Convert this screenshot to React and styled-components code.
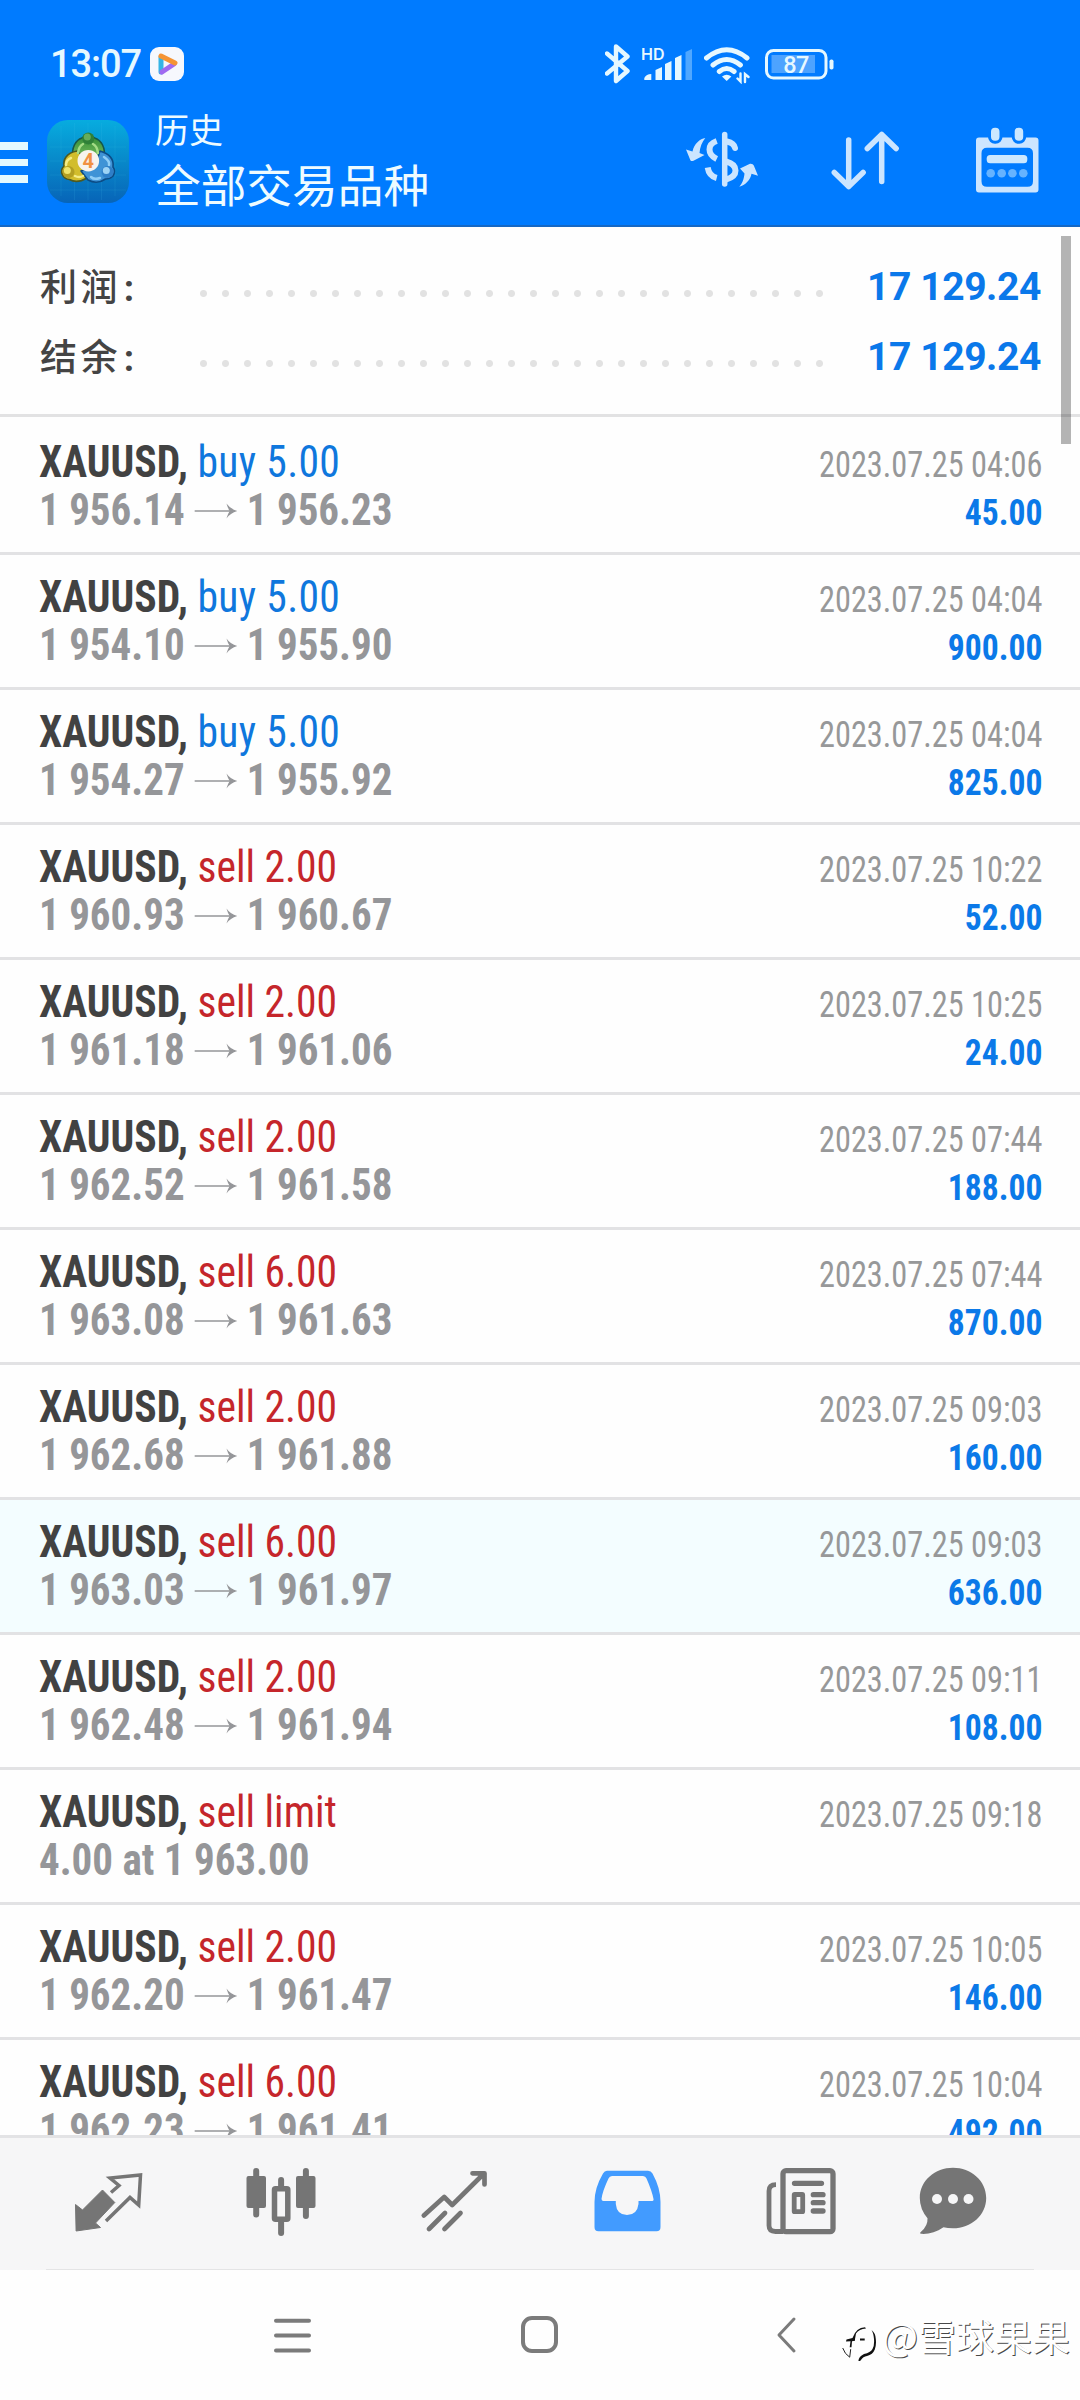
import React from "react";
import styled, { createGlobalStyle } from "styled-components";

const GlobalStyle = createGlobalStyle`
	* {
		box-sizing: border-box;
	}
	body {
		margin: 0;
		background: #fff;
		font-family: Roboto, "Noto Sans CJK SC", sans-serif;
	}
	svg {
		display: block;
		flex: none;
	}
`;

const DEALS = [
	{ type: 'buy', label: 'buy 5.00', open: '1 956.14', close: '1 956.23', time: '2023.07.25 04:06', profit: '45.00' },
	{ type: 'buy', label: 'buy 5.00', open: '1 954.10', close: '1 955.90', time: '2023.07.25 04:04', profit: '900.00' },
	{ type: 'buy', label: 'buy 5.00', open: '1 954.27', close: '1 955.92', time: '2023.07.25 04:04', profit: '825.00' },
	{ type: 'sell', label: 'sell 2.00', open: '1 960.93', close: '1 960.67', time: '2023.07.25 10:22', profit: '52.00' },
	{ type: 'sell', label: 'sell 2.00', open: '1 961.18', close: '1 961.06', time: '2023.07.25 10:25', profit: '24.00' },
	{ type: 'sell', label: 'sell 2.00', open: '1 962.52', close: '1 961.58', time: '2023.07.25 07:44', profit: '188.00' },
	{ type: 'sell', label: 'sell 6.00', open: '1 963.08', close: '1 961.63', time: '2023.07.25 07:44', profit: '870.00' },
	{ type: 'sell', label: 'sell 2.00', open: '1 962.68', close: '1 961.88', time: '2023.07.25 09:03', profit: '160.00' },
	{ type: 'sell', label: 'sell 6.00', open: '1 963.03', close: '1 961.97', time: '2023.07.25 09:03', profit: '636.00', active: true },
	{ type: 'sell', label: 'sell 2.00', open: '1 962.48', close: '1 961.94', time: '2023.07.25 09:11', profit: '108.00' },
	{ type: 'sell', label: 'sell limit', note: '4.00 at 1 963.00', time: '2023.07.25 09:18' },
	{ type: 'sell', label: 'sell 2.00', open: '1 962.20', close: '1 961.47', time: '2023.07.25 10:05', profit: '146.00' },
	{ type: 'sell', label: 'sell 6.00', open: '1 962.23', close: '1 961.41', time: '2023.07.25 10:04', profit: '492.00' }
];

const TOTALS = [
	{ label: '利润', value: '17 129.24' },
	{ label: '结余', value: '17 129.24' }
];

const Screen = styled.div`
	position: relative;
	display: flex;
	flex-direction: column;
	width: 1080px;
	height: 2400px;
	overflow: hidden;
	background: #fefefe;
`;

const Header = styled.header`
	flex: none;
	height: 227px;
	background: #007bff;
	border-bottom: 2px solid #1668c4;
`;

const StatusBar = styled.div`
	display: flex;
	align-items: center;
	height: 100px;
	padding: 28px 0 0 50px;
	color: #e6f8ff;
`;

const Clock = styled.span`
	width: 100px;
	font-size: 38px;
	font-weight: 500;
	line-height: 40px;
	letter-spacing: -1.1px;
	white-space: nowrap;
`;

const StatusIcons = styled.div`
	display: flex;
	margin-left: 421px;
	gap: 12px;
`;

const AppBar = styled.div`
	display: flex;
	height: 125px;
`;

const MenuIcon = styled.div`
	display: flex;
	flex-direction: column;
	gap: 9px;
	width: 28px;
	margin: 42px 19px 0 0;
	i {
		height: 7.5px;
		background: #e4f9ff;
	}
`;

const Logo = styled.svg`
	margin-top: 20px;
`;

const Titles = styled.div`
	width: 540px;
	margin: 6px 0 0 26px;
	color: #eefbff;
	white-space: nowrap;
`;

const Subtitle = styled.div`
	font-size: 34px;
	line-height: 50px;
`;

const Title = styled.div`
	font-size: 45.7px;
	line-height: 64px;
`;

const Actions = styled.div`
	display: flex;
	padding-top: 27px;
	margin-left: -9px;
	gap: 73px;
	svg:last-child {
		margin-left: 3px;
	}
`;

const Summary = styled.section`
	flex: none;
	height: 190px;
	padding: 23px 39px 0 40px;
	border-bottom: 3px solid #e2e2e3;
`;

const TotalRow = styled.div`
	display: flex;
	align-items: center;
	justify-content: space-between;
	height: 70px;
	color: #444;
`;

const TotalLabel = styled.span`
	width: 160px;
	font-size: 37px;
	font-weight: 500;
	letter-spacing: 3.4px;
	span {
		margin-left: 3px;
		font-weight: 700;
	}
`;

const Dots = styled.span`
	width: 638px;
	height: 7px;
	margin: 16px 23px 0 0;
	background: radial-gradient(circle at 3.5px 3.5px, #e2e2e2 3px, transparent 4px) 0 0 / 22px 7px;
`;

const TotalValue = styled.span`
	flex: 1;
	padding-top: 3px;
	color: #0a78ea;
	font-size: 39px;
	font-weight: 700;
	letter-spacing: -.4px;
	text-align: right;
	white-space: nowrap;
`;

const List = styled.main`
	flex: none;
	height: 1718px;
	padding-top: 3px;
	overflow: hidden;
`;

const Row = styled.div`
	display: flex;
	justify-content: space-between;
	height: 135px;
	padding: 18px 38px 0 39px;
	background: ${props => props.$active ? '#f3fdff' : 'transparent'};
	border-bottom: 3px solid #e2e2e4;
	font-stretch: 75%;
	font-family: "Roboto Condensed", Roboto, sans-serif;
	white-space: nowrap;
`;

// the app's typeface is a bit narrower than Roboto Condensed
const Narrow = styled.div`
	line-height: 48px;
	transform: scaleX(${props => props.$scale});
	transform-origin: ${props => props.$origin || 'left'};
`;

const Left = styled.div`
	padding-top: 1px;
`;

const Symbol = styled(Narrow)`
	color: #424242;
	font-size: 43.5px;
	font-weight: 700;
	span {
		color: ${props => props.$type === 'buy' ? '#0f77dd' : '#c5262b'};
		font-weight: 400;
		letter-spacing: ${props => props.$type === 'buy' ? '.35px' : '0'};
	}
`;

const Prices = styled(Narrow)`
	display: flex;
	align-items: center;
	color: #959699;
	font-size: 43.5px;
	font-weight: 700;
	svg {
		margin: 0 10px;
	}
`;

const Right = styled.div`
	text-align: right;
`;

const Time = styled(Narrow)`
	padding-top: 3px;
	color: #979899;
	font-size: 36.5px;
`;

const Profit = styled(Narrow)`
	color: #0b79e8;
	font-size: 36.5px;
	font-weight: 700;
`;

const ScrollThumb = styled.div`
	position: absolute;
	top: 236px;
	right: 9px;
	width: 10px;
	height: 208px;
	background: rgba(0, 0, 0, .29);
`;

const TabBar = styled.nav`
	flex: none;
	display: grid;
	grid-template-columns: 172px 173px 173px 174px 152px 70px;
	height: 135px;
	padding: 28px 0 0 74px;
	background: linear-gradient(#e4e4e5, #e4e4e5) 46px 100% / 988px 1px no-repeat, #f6f6f7;
	border-top: 3px solid #e3e3e5;
`;

const SystemBar = styled.div`
	flex: 1;
	display: flex;
	align-items: flex-start;
	padding: 44px 0 0 272px;
`;

const NavButton = styled.svg`
	margin-right: ${props => props.$gap}px;
	fill: none;
	stroke: #7b7b7b;
	stroke-width: 4;
	stroke-linecap: round;
	stroke-linejoin: round;
`;

const Watermark = styled.div`
	display: flex;
	align-items: center;
	margin-top: -5px;
	color: #fff;
	font-family: "Noto Sans CJK SC", sans-serif;
	font-size: 38px;
	line-height: 48px;
	text-shadow: 1px 1px 0 #484848;
	white-space: nowrap;
`;

const PlayerBadge = () => (
	<svg width="34" height="34" viewBox="0 0 34 34">
		<rect width="34" height="34" rx="9" fill="#f6f8fd" />
		<g fill="none" strokeWidth="5" strokeLinecap="round">
			<path d="M11 10v15" stroke="#35b4e6" />
			<path d="M12 25l12-8" stroke="#a06af0" />
			<path d="M11 9l14 7" stroke="#f59434" />
		</g>
	</svg>
);

const Bluetooth = () => (
	<svg width="25" height="40" viewBox="0 0 25 40">
		<path d="M2 9.5L22.5 27 11 37V2.5l11.500 10L2 29.5" fill="none" stroke="currentColor" strokeWidth="4.4" strokeLinecap="round" strokeLinejoin="round" />
	</svg>
);

const Signal = () => (
	<svg width="50" height="40" viewBox="0 0 50 40" fill="currentColor">
		<text x="-1" y="16" fontFamily="Inter" fontSize="16" fontWeight="600">HD</text>
		<path d="M2.3 36v-2q2-4 7-4v6zM13.500 36V26l6.500-3v13zM23 36V20l6.500-3v19zM33 36V14l6.500-3v25z" />
		<path d="M43.500 36V8l6.500-3v31z" opacity=".35" />
	</svg>
);

const Wifi = () => (
	<svg width="48" height="40" viewBox="0 0 48 40" fill="none" stroke="currentColor" strokeWidth="5" strokeLinecap="round">
		<path d="M2.5 14Q22.7-2.5 43 14M9 21q13.700-11 27.400 0M15.300 27.500q7.400-6 14.800 0" />
		<path d="M18 32.500q4.700-3.500 9.400 0l-4.700 4.500z" fill="currentColor" stroke="none" />
		<path d="M36.500 29.500v8l-3-3M41 38v-8l3.500 3" strokeWidth="2.400" />
	</svg>
);

const Battery = () => (
	<svg width="70" height="40" viewBox="0 0 70 40" fill="none">
		<rect x="2.500" y="6.500" width="59.500" height="27.500" rx="7" stroke="currentColor" strokeWidth="3" />
		<rect x="7.500" y="11" width="43.500" height="18" fill="#fff" opacity=".3" />
		<rect x="65.500" y="15.500" width="4" height="10" rx="1.800" fill="currentColor" />
		<text x="32" y="28.500" textAnchor="middle" fontSize="23.500" fontWeight="500" letterSpacing="-.6" fill="currentColor">87</text>
	</svg>
);

const AppLogo = () => (
	<Logo width="82" height="83" viewBox="0 0 82 83">
		<defs>
			<linearGradient id="tile" x1="0" y1="0" x2="0" y2="1">
				<stop offset="0" stopColor="#07acdf" />
				<stop offset=".5" stopColor="#0888c9" />
				<stop offset="1" stopColor="#0764b8" />
			</linearGradient>
			<linearGradient id="green" x1="0" y1="0" x2="0" y2="1">
				<stop offset="0" stopColor="#2f8a35" />
				<stop offset="1" stopColor="#86c765" />
			</linearGradient>
		</defs>
		<rect width="82" height="83" rx="21" fill="url(#tile)" />
		<path d="M14 6v70M27.500 3v77M41 3v77M54.500 3v77M68 6v70M3 27h76M3 41h76M3 55h76M3 70h76" stroke="#4cc4ee" strokeOpacity=".12" />
		<g strokeWidth="1.600" strokeLinejoin="round">
			<path d="M26 39C24 27 29 20 35 18q6-6 12.500 0C54 20 59 27 57 39L41 44z" fill="url(#green)" stroke="#17584a" />
			<path d="M30 31C19 33 16 40 17 46q-4 4-1.500 9 2 4 7 4.500Q30 64 40 58L36 36z" fill="#d2bd2c" stroke="#4e5a22" />
			<path d="M53 31C63 34 67 40 66 47q3 4 0 9-3 3-7.500 3Q50 65 41 60L34 51l14-6z" fill="#3f93d6" stroke="#0c4c86" />
		</g>
		<g fill="none" strokeWidth="2.500" strokeLinecap="round">
			<path d="M31 33q1-7 5-9M51 33q-1-7-5-9" stroke="#a5dc86" />
			<path d="M24 38q-5 2-5 7M28 56q4 2 8 0" stroke="#f4ec86" />
			<path d="M57 37q6 4 5 8M53 58q-6 2-9-1" stroke="#8fcdf6" />
		</g>
		<circle cx="41.300" cy="18.500" r="6" fill="#2f8038" />
		<circle cx="40.300" cy="17" r="3.500" fill="#67ac5b" />
		<circle cx="21.500" cy="52" r="6" fill="#b39f22" />
		<circle cx="20.300" cy="50.500" r="3.500" fill="#efe56c" />
		<circle cx="60.500" cy="52" r="6" fill="#2f7fc8" />
		<circle cx="59.300" cy="50.500" r="3.500" fill="#9ed3f5" />
		<circle cx="41.300" cy="40.700" r="10.800" fill="#f7f3ee" />
		<text x="41.300" y="47.700" textAnchor="middle" fontSize="20" fontWeight="700" fill="#f19143">4</text>
	</Logo>
);

const CurrencyIcon = () => (
	<svg width="72" height="66" viewBox="0 -4 72 66" fill="#cce5ff">
		<g fill="none" stroke="#cce5ff" strokeWidth="6">
			<path d="M38.700 3.500v49.500" strokeWidth="5.500" strokeLinecap="round" />
			<path d="M30.700 10Q23.500 12.500 23.500 18.500T30.700 28M21.700 36.500Q23 45 30.700 47" />
			<path d="M41 10.500Q48 12 49 17" strokeLinecap="round" />
			<path d="M40 30.500Q49.500 33 49.500 39.500T40 48.500" />
		</g>
		<path d="M19.300 7C14 7.500 8 13 6.500 20.500L0 18.500l4.500 11q1.200 1 3 .2L18.500 24l-5-2c.5-6 2.500-11 5.800-15zM53.300 55.700C56 53 58 48 58.500 42.500l-4.500-5 10-4.700q3-.3 3.800 1.700L72 44.700l-6.500-1.900C64.500 49 59 54.500 53.300 55.700z" />
	</svg>
);

const SortIcon = () => (
	<svg width="68" height="66" viewBox="0 -4 68 66" fill="none" stroke="#cce5ff" strokeWidth="5.500" strokeLinecap="round" strokeLinejoin="round">
		<path d="M17.700 9v46.500M3.300 41.500l14.400 14 14.400-14M50.700 50.500V3.500M36.300 17.500l14.400-14 14.400 14" />
	</svg>
);

const CalendarIcon = () => (
	<svg width="65" height="66" viewBox="0 0 65 66">
		<path fillRule="evenodd" fill="#cce5ff" d="M4 10.500h56.500q3 0 3 3v49q0 3-3 3H4q-3 0-3-3v-49q0-3 3-3zM12 20.700q-5.500 0-5.500 5.500v28q0 5.500 5.500 5.500h40.500q5.500 0 5.500-5.500v-28q0-5.500-5.500-5.500z" />
		<g fill="#cce8ff" stroke="#007bff" strokeWidth="3">
			<rect x="14.500" y="-.8" width="11.500" height="16" rx="5.500" />
			<rect x="38.200" y="-.8" width="11.500" height="16" rx="5.500" />
		</g>
		<rect x="11.700" y="28" width="40.600" height="8.300" rx="3.500" fill="#cce8ff" />
		<g fill="#66b3ff">
			<circle cx="15.700" cy="46.300" r="4.300" />
			<circle cx="26.700" cy="46.300" r="4.300" />
			<circle cx="37.400" cy="46.300" r="4.300" />
			<circle cx="48.300" cy="46.300" r="4.300" />
		</g>
	</svg>
);

const PriceArrow = () => (
	<svg width="46" height="18" viewBox="0 0 46 18">
		<path d="M0 9h42" stroke="#959699" strokeWidth="1.500" />
		<path d="M34 1.500Q38 7 45.500 9 38 11 34 16.500q1.500-5 3.500-7.500-2-2.500-3.500-7.500z" fill="#959699" />
	</svg>
);

const QuotesIcon = () => (
	<svg width="70" height="72" viewBox="0 0 70 72">
		<path d="M1.500 38.500l7 5.500 20-20 12.300 12.500L21.500 57l5 4.500-24.400 3.500z" fill="#757575" stroke="#757575" strokeLinejoin="round" />
		<path d="M37 26.500l8-7-9-7.500 30.500-3-1.800 30-8.700-7.500-24 23.500" fill="none" stroke="#757575" strokeWidth="3.500" />
	</svg>
);

const CandlesIcon = () => (
	<svg width="70" height="72" viewBox="0 0 70 72" fill="#757575" stroke="#757575">
		<path d="M10.200 5v43.500M35.100 14v9M35.100 56v11M59.900 5v45" strokeWidth="6" strokeLinecap="round" />
		<rect x="1.500" y="11" width="17.500" height="30" rx="1" strokeWidth="2" />
		<rect x="51" y="11" width="17.500" height="30" rx="1" strokeWidth="2" />
		<rect x="28.500" y="22.700" width="13.300" height="30.600" rx="1" strokeWidth="5.500" fill="#f6f6f7" />
	</svg>
);

const TrendIcon = () => (
	<svg width="70" height="72" viewBox="0 0 70 72" fill="none" stroke="#757575" strokeWidth="4.700" strokeLinecap="round" strokeLinejoin="round">
		<path d="M4.800 49.500L25.200 31l8 8L65 7.500M53.500 7.300h12v11.200M10 63l16-16M25.500 63l16-16" />
	</svg>
);

const HistoryIcon = () => (
	<svg width="70" height="72" viewBox="0 0 70 72">
		<path fillRule="evenodd" fill="#429bff" d="M15 4.700h41q3 0 4.500 2.800 8 14.500 8 28.500v25q0 4.300-4 4.300H6.500q-4 0-4-4.300V36q0-14 8.500-28.500Q12.500 4.700 15 4.700zM20 10q-2.500 0-3.500 2.500Q10.500 25 9.500 33q0 2 2 2h12.300v3q1 11 11.200 11t11.500-11v-3H59.500q2.500 0 2-2Q60 25 54.500 12.500 53.500 10 51 10z" />
	</svg>
);

const NewsIcon = () => (
	<svg width="70" height="72" viewBox="0 0 70 72" fill="none" stroke="#757575" strokeWidth="5.300" strokeLinecap="round">
		<rect x="17" y="4.700" width="50" height="61" rx="3" />
		<path d="M10 18.700q-7 0-7 6.300v34.500q0 6 6.500 6H17" strokeLinecap="butt" strokeWidth="4.800" />
		<path d="M28.500 17.300h27M47.300 28.700H57M47.300 36.700H57M47.300 45H57" />
		<rect x="28.200" y="28.500" width="8.500" height="17.200" rx=".5" strokeWidth="4.800" />
	</svg>
);

const ChatIcon = () => (
	<svg width="70" height="72" viewBox="0 0 70 72">
		<path fill="#757575" d="M35 1.700c18 0 33.200 13 33.200 30.300S53 62.300 35 62.300q-5.500 0-9.500-1C18 66.500 10 68.500 2.500 67.800q-1-1 .5-2 7-6 6.500-13.500Q1.800 43 1.800 32C1.800 14.700 17 1.700 35 1.700z" />
		<g fill="#f6f6f7">
			<circle cx="19" cy="33" r="5" />
			<circle cx="35" cy="33" r="5" />
			<circle cx="50.500" cy="33" r="5" />
		</g>
	</svg>
);

const WatermarkLogo = () => (
	<svg width="40" height="52" viewBox="0 -5 40 52" fill="#111">
		<path d="M10.500 24Q14 13.500 23 13.200l1 1.300q-7 .5-10 5l-1 5.500v1.700l-3 .5-.5 6h-1.800l.8-6-4.500.3.500-2z" />
		<path d="M18 24.500h4.700v2H18zM29.500 16q4 3 4.300 9 .7 6-1 10.500-2 5-7.800 6.500-4 .5-6 4l-2.500 2.500q-.8-5.500 5.500-8.500 6.500-1.500 8.500-5 2-3 1.500-10-.5-6-2.500-9z" />
		<path d="M.7 34q2 6 7 9.200l1-8" fill="none" stroke="#222" strokeWidth="1" />
	</svg>
);

const DealRow = ({ deal }) => (
	<Row $active={deal.active}>
		<Left>
			<Symbol $type={deal.type} $scale={.956}>XAUUSD, <span>{deal.label}</span></Symbol>
			{ deal.note
				? <Prices $scale={.942}>{deal.note}</Prices>
				: <Prices $scale={.942}>{deal.open}<PriceArrow />{deal.close}</Prices>
			}
		</Left>
		<Right>
			<Time $scale={.885} $origin="right">{deal.time}</Time>
			{ deal.profit && <Profit $scale={.92} $origin="right">{deal.profit}</Profit> }
		</Right>
	</Row>
);

class App extends React.Component {
	render() {
		const totals = TOTALS.map((total) => (
			<TotalRow key={total.label}>
				<TotalLabel>{total.label}<span>:</span></TotalLabel>
				<Dots />
				<TotalValue>{total.value}</TotalValue>
			</TotalRow>
		));
		const deals = DEALS.map((deal, i) => (
			<DealRow key={`deal-${i}`} deal={deal} />
		));
		return (
			<Screen>
				<GlobalStyle />
				<Header>
					<StatusBar>
						<Clock>13:07</Clock>
						<PlayerBadge />
						<StatusIcons>
							<Bluetooth />
							<Signal />
							<Wifi />
							<Battery />
						</StatusIcons>
					</StatusBar>
					<AppBar>
						<MenuIcon><i /><i /><i /></MenuIcon>
						<AppLogo />
						<Titles>
							<Subtitle>历史</Subtitle>
							<Title>全部交易品种</Title>
						</Titles>
						<Actions>
							<CurrencyIcon />
							<SortIcon />
							<CalendarIcon />
						</Actions>
					</AppBar>
				</Header>
				<Summary>{ totals }</Summary>
				<List>{ deals }</List>
				<TabBar>
					<QuotesIcon />
					<CandlesIcon />
					<TrendIcon />
					<HistoryIcon />
					<NewsIcon />
					<ChatIcon />
				</TabBar>
				<SystemBar>
					<NavButton $gap={207} width="40" height="42" viewBox="0 0 40 42">
						<path d="M4 6.700h33M4 21.500h33M4 36.500h33" />
					</NavButton>
					<NavButton $gap={214} width="40" height="42" viewBox="0 0 40 42">
						<rect x="4" y="4" width="33" height="33" rx="9" />
					</NavButton>
					<NavButton $gap={45} width="24" height="42" viewBox="0 0 24 42">
						<path d="M21 5L6 21l15 16" strokeWidth="3" />
					</NavButton>
					<Watermark>
						<WatermarkLogo />
						@雪球果果
					</Watermark>
				</SystemBar>
				<ScrollThumb />
			</Screen>
		);
	}
}
export default App;
